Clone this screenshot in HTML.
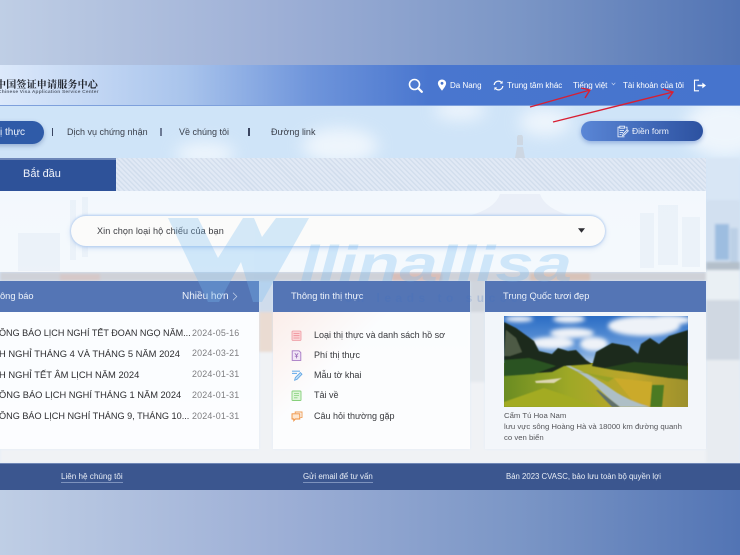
<!DOCTYPE html>
<html lang="vi">
<head>
<meta charset="utf-8">
<title>CVASC</title>
<style>
*{box-sizing:border-box;margin:0;padding:0}
html,body{width:740px;height:555px;overflow:hidden}
body{position:relative;background:linear-gradient(90deg,#bfcee5 0%,#9dafd6 38%,#7b96c6 70%,#5274b4 100%);font-family:"Liberation Sans","DejaVu Sans",sans-serif}
.a{position:absolute;white-space:nowrap}
#head{left:0;top:65px;width:740px;height:41px;background:linear-gradient(90deg,#dce9fb 0%,#a9c4ec 25%,#6f95db 42%,#4976cf 58%,#4674cd 100%);border-bottom:1px solid #7ea0dc}
#main{left:0;top:106px;width:740px;height:357px;overflow:hidden;background:linear-gradient(180deg,#cfe4f8 0%,#d4e6f8 40%,#e4eef8 100%)}
.w{color:#fff;font-size:8px}
.nav{color:#3a3f4a;font-size:9px;top:127px}
.sep{top:128px;width:1.5px;height:8px;background:#3a4560}
.hd{background:#5475b5;height:31px;top:281px;color:#eef3fb;font-size:9.3px;line-height:30px}
.pn{top:312px;height:137px;background:rgba(255,255,255,.88)}
.row{color:#2d2d30;left:-1px;width:192px;overflow:hidden}
.dt{color:#7d7d80;font-size:8.9px;left:192px;letter-spacing:.2px}
.li{left:314px;color:#37383c;font-size:9px}
.ft{color:#e8edf6;top:472px}
.ul{border-bottom:1px solid #7d92bd;padding-bottom:1px}
.cap{left:504px;font-size:7.75px;color:#55565a}
</style>
</head>
<body>

<div class="a" id="head"></div>

<!-- logo -->
<div class="a" style="left:-4px;top:76px;font-family:'Liberation Serif','Noto Serif CJK SC',serif;font-size:10px;font-weight:700;color:#20242c;letter-spacing:.2px">中国签证申请服务中心</div>
<div class="a" style="left:-2px;top:90px;font-size:4.85px;font-weight:700;color:#5a6475;letter-spacing:.2px">Chinese Visa Application Service Center</div>

<!-- top right -->
<svg class="a" style="left:408px;top:78px" width="15" height="15" viewBox="0 0 15 15"><circle cx="6.5" cy="6.5" r="5" fill="none" stroke="#fff" stroke-width="1.6"/><path d="M10.2 10.2L13.8 13.8" stroke="#fff" stroke-width="2.2" stroke-linecap="round"/></svg>
<svg class="a" style="left:437px;top:79px" width="10" height="12" viewBox="0 0 10 12"><path d="M5 .5C2.4.5.9 2.4.9 4.4.9 7 5 11.7 5 11.7S9.1 7 9.1 4.4C9.1 2.4 7.6.5 5 .5Z" fill="#fff"/><circle cx="5" cy="4.3" r="1.4" fill="#4674cd"/></svg>
<div class="a w" style="left:450px;top:81px">Da Nang</div>
<svg class="a" style="left:493px;top:80px" width="11" height="11" viewBox="0 0 11 11"><path d="M1.2 5A4.3 4.3 0 0 1 8.7 2.6M9.8 6A4.3 4.3 0 0 1 2.3 8.4" fill="none" stroke="#fff" stroke-width="1.2"/><path d="M9.6.8V3.6H6.9ZM1.4 10.2V7.4H4.1Z" fill="#fff"/></svg>
<div class="a w" style="left:507px;top:81px">Trung tâm khác</div>
<div class="a w" style="left:573px;top:81px">Tiếng việt</div>
<svg class="a" style="left:611px;top:82px" width="5" height="4" viewBox="0 0 5 4"><path d="M.7.8L2.5 2.8 4.3.8" fill="none" stroke="#c5d4f0" stroke-width=".7"/></svg>
<div class="a w" style="left:623px;top:81px">Tài khoản của tôi</div>
<svg class="a" style="left:693px;top:79px" width="14" height="13" viewBox="0 0 14 13"><path d="M6 1.2H1.5V11.8H6" fill="none" stroke="#fff" stroke-width="1.1"/><path d="M4.5 6.5H10" stroke="#fff" stroke-width="1.5"/><path d="M9.3 3.6L13 6.5 9.3 9.4Z" fill="#fff"/></svg>

<!-- main background -->
<div class="a" id="main">
<svg width="740" height="357" viewBox="0 0 740 357" style="position:absolute;left:0;top:0">
<defs>
<filter id="b1"><feGaussianBlur stdDeviation="8"/></filter>
<filter id="b2"><feGaussianBlur stdDeviation="1.2"/></filter>
</defs>
<rect x="0" y="0" width="740" height="52" fill="#cfe4f8"/>
<g filter="url(#b1)" fill="#fff" opacity=".65">
<ellipse cx="205" cy="48" rx="30" ry="12"/>
<ellipse cx="340" cy="40" rx="38" ry="18"/>
<ellipse cx="460" cy="4" rx="26" ry="10"/>
<ellipse cx="545" cy="16" rx="26" ry="14"/>
<ellipse cx="725" cy="22" rx="40" ry="30"/>
</g>
<g filter="url(#b2)">
<rect x="706" y="52" width="34" height="80" fill="#d8e6f5"/>
<rect x="706" y="94" width="34" height="62" fill="#d2e0f0"/>
<rect x="715" y="118" width="14" height="36" fill="#9dbde0"/>
<rect x="730" y="122" width="8" height="34" fill="#bcd0e6"/>
<rect x="706" y="156" width="34" height="8" fill="#b4bfca"/>
<rect x="706" y="164" width="34" height="30" fill="#eaf0f4"/>
<rect x="706" y="194" width="34" height="60" fill="#d0d8e2"/>
<rect x="706" y="254" width="34" height="103" fill="#e8ecf1"/>
<rect x="0" y="166" width="706" height="9" fill="#cfd1d8"/>
<rect x="60" y="168" width="40" height="7" fill="#d6c8c8"/>
<rect x="392" y="167" width="50" height="8" fill="#d8bdb8"/>
<rect x="530" y="167" width="60" height="8" fill="#d8c2b8"/>
<rect x="259" y="175" width="14" height="31" fill="#cfdcec"/>
<rect x="259" y="206" width="14" height="40" fill="#eadbd2"/>
<rect x="259" y="246" width="14" height="111" fill="#f0f2f5"/>
<rect x="470" y="175" width="15" height="31" fill="#d0d5dd"/>
<rect x="470" y="206" width="15" height="70" fill="#e4e8ed"/>
<rect x="470" y="276" width="15" height="81" fill="#f0f2f5"/>
<rect x="0" y="343" width="706" height="14" fill="#f0f2f5"/>
</g>
</svg>
</div>

<!-- white panel -->
<div class="a" style="left:0;top:191px;width:706px;height:81px;background:rgba(255,255,255,.74)"></div>
<svg class="a" style="left:0;top:191px" width="706" height="81" viewBox="0 0 706 81" opacity=".22"><g fill="#cfdced">
<rect x="18" y="42" width="42" height="38"/><rect x="70" y="9" width="6" height="60"/><rect x="82" y="6" width="6" height="60"/><rect x="640" y="22" width="14" height="55"/><rect x="658" y="14" width="20" height="60"/><rect x="682" y="26" width="18" height="50"/></g></svg>
<svg class="a" style="left:465px;top:191px" width="110" height="26" viewBox="0 0 110 26"><path d="M3 25Q30 18 35 3H75Q80 18 107 25Z" fill="#e6ebf5" opacity=".7"/></svg>

<!-- pattern strip -->
<div class="a" style="left:116px;top:158px;width:590px;height:33px;background:repeating-linear-gradient(45deg,#e2eaf5 0 2px,#d3deed 2px 3.5px),#d8e3f0;opacity:.95"></div>
<div class="a" style="left:0;top:158px;width:116px;height:33px;background:#2e5299;border-top:2px solid #6d86b8;color:#f1f4fb;font-size:11px;line-height:29px;padding-left:23px">Bắt đầu</div>

<!-- tower -->
<svg class="a" style="left:505px;top:133px" width="30" height="26" viewBox="0 0 30 26"><path d="M12 12h6V4l-1-2h-4l-1 2zM10 25l2-11h6l2 11z" fill="#ccd5df" opacity=".85"/></svg>

<!-- nav -->
<div class="a" style="left:-40px;top:121px;width:84px;height:23px;border-radius:12px;background:#2f5ba8;box-shadow:0 2px 5px rgba(60,90,150,.4);color:#eef3fc;font-size:10px;line-height:23px;padding-left:40px">ị thực</div>
<div class="a sep" style="left:51.5px"></div>
<div class="a nav" style="left:67px">Dịch vụ chứng nhận</div>
<div class="a sep" style="left:160px;background:#6c7a94"></div>
<div class="a nav" style="left:179px">Về chúng tôi</div>
<div class="a sep" style="left:248px"></div>
<div class="a nav" style="left:271px">Đường link</div>

<!-- fill form button -->
<div class="a" style="left:581px;top:121px;width:122px;height:20px;border-radius:10px;background:linear-gradient(90deg,#5a86d6,#2c51a0);box-shadow:0 2px 5px rgba(70,110,190,.45);color:#eef3fc;font-size:8.5px;line-height:20px;padding-left:51px">Điền form</div>
<svg class="a" style="left:617px;top:125px" width="12" height="13" viewBox="0 0 12 13"><path d="M8.5 2.2H10V5M7.5 11.8H1V2.2H2.6M2.8 1.2H7.6V3.2H2.8ZM2.6 5.4H7M2.6 7.4H6M2.6 9.4H4.5M5.6 10.6L6 9 10.2 4.8 11.3 5.9 7.1 10.1Z" fill="none" stroke="#e8effb" stroke-width=".9"/></svg>

<!-- select -->
<div class="a" style="left:71px;top:216px;width:534px;height:30px;border-radius:15px;background:#fbfbfa;box-shadow:0 -1px 2px #b6cff0,0 1px 2px #b6cff0,0 2px 6px rgba(120,160,220,.3);color:#3c3d42;font-size:9.1px;line-height:30px;padding-left:26px;letter-spacing:.1px">Xin chọn loại hộ chiếu của bạn</div>
<svg class="a" style="left:578px;top:228px" width="7" height="5" viewBox="0 0 7 5"><path d="M0 .2H7L3.5 4.8Z" fill="#2d2d33"/></svg>

<!-- cards -->
<div class="a hd" style="left:0;width:259px;padding-left:0">ông báo</div>
<div class="a" style="left:182px;top:291px;color:#eef3fb;font-size:10px">Nhiều hơn</div>
<svg class="a" style="left:232px;top:292px" width="6" height="9" viewBox="0 0 6 9"><path d="M1 .8L4.8 4.5 1 8.2" fill="none" stroke="#c5d2ea" stroke-width=".7"/></svg>
<div class="a hd" style="left:273px;width:197px;padding-left:18px">Thông tin thị thực</div>
<div class="a hd" style="left:485px;width:221px;padding-left:18px">Trung Quốc tươi đẹp</div>

<div class="a pn" style="left:0;width:259px"></div>
<div class="a pn" style="left:273px;width:197px;background:linear-gradient(135deg,rgba(255,238,232,.9),rgba(255,255,255,.9) 35%)"></div>
<div class="a pn" style="left:485px;width:221px;background:rgba(244,246,250,.92)"></div>

<div class="a row" style="top:328px;font-size:9.05px">ÔNG BÁO LỊCH NGHỈ TẾT ĐOAN NGỌ NĂM...</div><div class="a dt" style="top:328px">2024-05-16</div>
<div class="a row" style="top:348px;font-size:9.4px">H NGHỈ THÁNG 4 VÀ THÁNG 5 NĂM 2024</div><div class="a dt" style="top:348px">2024-03-21</div>
<div class="a row" style="top:369px;font-size:9.4px">H NGHỈ TẾT ÂM LỊCH NĂM 2024</div><div class="a dt" style="top:369px">2024-01-31</div>
<div class="a row" style="top:390px;font-size:9.3px">ÔNG BÁO LỊCH NGHỈ THÁNG 1 NĂM 2024</div><div class="a dt" style="top:390px">2024-01-31</div>
<div class="a row" style="top:411px;font-size:9.15px">ÔNG BÁO LỊCH NGHỈ THÁNG 9, THÁNG 10...</div><div class="a dt" style="top:411px">2024-01-31</div>

<!-- list icons -->
<svg class="a" style="left:291px;top:330px" width="11" height="11" viewBox="0 0 11 11"><rect x="1" y="1" width="9" height="9.5" rx="1" fill="#fbd5d8" stroke="#ee9aa2" stroke-width=".8"/><path d="M2.5 3.5H8.5M2.5 5.7H8.5M2.5 8H8.5" stroke="#ee8a93" stroke-width=".8"/></svg>
<svg class="a" style="left:291px;top:350px" width="11" height="11" viewBox="0 0 11 11"><path d="M1.2.8H8L9.8 2.6V10.4H1.2Z" fill="#f1e6f6" stroke="#a678c4" stroke-width=".9"/><path d="M3.8 3.2L5.5 5.4 7.2 3.2M5.5 5.4V8.4M3.8 6.2H7.2" stroke="#8e5ab0" stroke-width=".7" fill="none"/></svg>
<svg class="a" style="left:291px;top:370px" width="12" height="11" viewBox="0 0 12 11"><path d="M1 1.2H9M1 3.4H6" stroke="#72b1ea" stroke-width="1.1"/><path d="M3.6 10.2L4.3 7.6 9.4 2.6 11 4.2 6 9.4Z" fill="#bfe0f8" stroke="#5ea2e2" stroke-width=".8"/></svg>
<svg class="a" style="left:291px;top:390px" width="11" height="11" viewBox="0 0 11 11"><rect x="1" y="1" width="9" height="9.5" rx=".8" fill="#dff5da" stroke="#86d07b" stroke-width=".9"/><path d="M3 3.5H8M3 5.6H8M3 7.8H6.5" stroke="#86d07b" stroke-width=".8"/></svg>
<svg class="a" style="left:291px;top:411px" width="12" height="11" viewBox="0 0 12 11"><path d="M4.2 2.2V1H11V6.4H9.4" fill="none" stroke="#ee9a4f" stroke-width=".9"/><path d="M1 2.8H8.8V8H4.4L2.8 9.8V8H1Z" fill="#fde6cf" stroke="#ee8c38" stroke-width=".9"/></svg>

<div class="a li" style="top:330px">Loại thị thực và danh sách hồ sơ</div>
<div class="a li" style="top:350px">Phí thị thực</div>
<div class="a li" style="top:370px">Mẫu tờ khai</div>
<div class="a li" style="top:390px">Tải về</div>
<div class="a li" style="top:411px">Câu hỏi thường gặp</div>

<!-- photo -->
<svg class="a" style="left:504px;top:316px" width="184" height="91" viewBox="0 0 184 91">
<defs>
<linearGradient id="sky" x1="0" y1="0" x2="0" y2="1"><stop offset="0" stop-color="#2a6cc4"/><stop offset=".7" stop-color="#6ea0dc"/><stop offset="1" stop-color="#c4d6ea"/></linearGradient>
<linearGradient id="fld" x1="0" y1="0" x2="1" y2="0"><stop offset="0" stop-color="#6a8c22"/><stop offset=".35" stop-color="#9ea826"/><stop offset=".7" stop-color="#bfa62c"/><stop offset="1" stop-color="#9c902c"/></linearGradient>
<filter id="s"><feGaussianBlur stdDeviation="2"/></filter>
<filter id="s2"><feGaussianBlur stdDeviation=".6"/></filter>
</defs>
<rect width="184" height="50" fill="url(#sky)"/>
<g fill="#eef2f8" filter="url(#s)"><ellipse cx="68" cy="17" rx="22" ry="5"/><ellipse cx="140" cy="10" rx="36" ry="10"/><ellipse cx="165" cy="4" rx="22" ry="5"/><ellipse cx="65" cy="3" rx="16" ry="4"/><ellipse cx="48" cy="27" rx="22" ry="6"/><ellipse cx="90" cy="28" rx="14" ry="7"/><ellipse cx="15" cy="3" rx="14" ry="3"/></g>
<rect y="47" width="184" height="44" fill="url(#fld)"/>
<g filter="url(#s2)">
<path d="M0 6L12 12 30 25 35 35 48 38 54 32 64 35 72 34 82 44 88 48 60 50 48 56 15 58 0 58Z" fill="#1d2a1a"/>
<path d="M2 14L12 22 18 36 6 40 0 40Z" fill="#4e5a44"/>
<path d="M0 44L25 42 52 50 30 58 0 60Z" fill="#2b5220"/>
<path d="M88 50L92 36 108 27 125 30 134 38 137 28 146 22 155 28 165 20 184 14V63L165 62 140 58 110 54Z" fill="#1a2b1a"/>
<path d="M100 52L130 46 184 50V64L150 60Z" fill="#27441e"/>
<path d="M62 50Q80 58 92 70T116 91H146Q122 84 106 72T66 50Z" fill="#aebfc6"/>
<path d="M94 74L116 91H108Q100 83 92 74Z" fill="#5f706c"/>
<path d="M148 69H160L158 91H146Z" fill="#4b7a24"/>
<path d="M31 65L58 62 50 67 32 67Z" fill="#dcd6b0"/>
<path d="M0 86L40 72 96 91H0Z" fill="#a3ab24"/>
<path d="M110 62L148 66 146 91 128 84Z" fill="#cbaa2a"/>
<path d="M66 54L110 62 104 66 84 58Z" fill="#98a228"/>
</g>
</svg>
<div class="a cap" style="left:504px;top:411px">Cẩm Tú Hoa Nam</div>
<div class="a cap" style="top:422px">lưu vực sông Hoàng Hà và 18000 km đường quanh</div>
<div class="a cap" style="top:433px">co ven biển</div>

<!-- watermark -->
<svg class="a" style="left:0;top:0;pointer-events:none" width="740" height="555" viewBox="0 0 740 555">
<g fill="#79bdf3" opacity=".3">
<path d="M168 218H198L218 258 243 218H254L262 237 276 218H309L262 302H253L241 262 219 302H208Z"/>
<text x="300" y="281" font-family="Liberation Sans,sans-serif" font-size="50" font-style="italic" font-weight="700" textLength="272" lengthAdjust="spacingAndGlyphs">llinallisa</text>
</g>
<text x="345" y="302" font-family="Liberation Sans,sans-serif" font-size="12" font-weight="700" fill="#3f6fc0" opacity=".22" textLength="195">on leads to success</text>
</svg>

<!-- footer -->
<div class="a" style="left:0;top:463px;width:740px;height:27px;background:#3b568f;border-top:1px solid #6f86b5"></div>
<div class="a ft ul" style="left:61px;font-size:8.1px">Liên hệ chúng tôi</div>
<div class="a ft ul" style="left:303px;font-size:7.9px">Gửi email để tư vấn</div>
<div class="a ft" style="left:506px;font-size:7.8px">Bản 2023 CVASC, bảo lưu toàn bộ quyền lợi</div>

<!-- red arrows -->
<svg class="a" style="left:0;top:0" width="740" height="555" viewBox="0 0 740 555">
<path d="M530 107L590 90M581 88L590 90 585 98" fill="none" stroke="#d81f33" stroke-width="1.4"/>
<path d="M553 122L673 92M663 89L673 92 668 99" fill="none" stroke="#d81f33" stroke-width="1.4"/>
</svg>

</body>
</html>
